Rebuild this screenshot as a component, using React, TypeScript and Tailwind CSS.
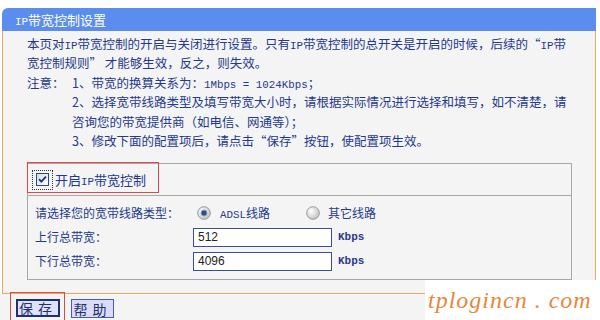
import React from "react";

// half-width text in the old router pages is a small monospace face
const A = ({ children }: { children: React.ReactNode }) => (
  <span className="font-['Liberation_Mono',monospace] text-[10.8px] leading-none">{children}</span>
);

const CheckBox = () => (
  <span className="flex h-[20px] w-[21px] items-center justify-center border border-dotted border-[#333]">
    <svg width="13" height="13" viewBox="0 0 13 13">
      <defs>
        <linearGradient id="cb" x1="0" y1="0" x2="1" y2="1">
          <stop offset="0" stopColor="#dcdcdc" />
          <stop offset="1" stopColor="#ffffff" />
        </linearGradient>
      </defs>
      <rect x="0.5" y="0.5" width="12" height="12" fill="url(#cb)" stroke="#1c5180" />
      <path d="M3 6.2 L5.3 8.6 L10 3.6" fill="none" stroke="#21308a" strokeWidth="1.8" />
    </svg>
  </span>
);

const Radio = ({ checked }: { checked?: boolean }) => (
  <svg width="14" height="14" viewBox="0 0 14 14">
    <defs>
      <radialGradient id={checked ? "rg1" : "rg2"} cx="0.35" cy="0.35" r="0.8">
        <stop offset="0" stopColor="#ffffff" />
        <stop offset="1" stopColor="#b9b9b9" />
      </radialGradient>
    </defs>
    <circle cx="7" cy="7" r="6.3" fill={`url(#${checked ? "rg1" : "rg2"})`} stroke="#9a9a9a" />
    {checked && <circle cx="7" cy="7" r="3" fill="#34507a" stroke="#7d9ccf" strokeWidth="1" />}
  </svg>
);

const Field = ({ value }: { value: string }) => (
  <div className="flex items-center">
    <div className="flex h-[19px] w-[139px] items-center border border-[#3b4c9e] bg-white pl-[4px] font-['Liberation_Sans',sans-serif] text-[12px] text-[#222]">
      {value}
    </div>
    <span className="ml-[6px] font-['Liberation_Mono',monospace] text-[11px] font-bold text-[#2b3a8a]">Kbps</span>
  </div>
);

export default function App() {
  return (
    <div className="relative h-[320px] w-[600px] overflow-hidden bg-white pt-[8px] font-['Noto_Sans_CJK_SC',sans-serif]">
      <div className="ml-[2px] w-[594px]">
        <div className="h-[23px] rounded-tl-[6px] bg-[#5b8def] pl-[13px] text-[13px] leading-[23px] text-white">
          <A>IP</A>带宽控制设置
        </div>
        <div className="h-[263px] border-x border-b border-[#f3a65d] bg-[#f4f4f4] pl-[24px] pt-[3px] text-[#24398d]">
          <div className="whitespace-nowrap text-[12.5px] leading-[19.4px]">
            <p>
              本页对<A>IP</A>带宽控制的开启与关闭进行设置。只有<A>IP</A>带宽控制的总开关是开启的时候，后续的“<A>IP</A>带
            </p>
            <p>宽控制规则” 才能够生效，反之，则失效。</p>
            <div className="flex">
              <span className="w-[45px]">注意：</span>
              <div>
                <p>
                  1、带宽的换算关系为：<A>1Mbps = 1024Kbps</A>；
                </p>
                <p>2、选择宽带线路类型及填写带宽大小时，请根据实际情况进行选择和填写，如不清楚，请</p>
                <p>咨询您的带宽提供商（如电信、网通等）；</p>
                <p>3、修改下面的配置项后，请点击“保存”按钮，使配置项生效。</p>
              </div>
            </div>
          </div>

          <div className="relative mt-[13px] w-[545px] border border-[#a8a8a8]">
            <div className="flex h-[32px] items-center gap-[2px] border-b border-[#a8a8a8] pl-[4px] text-[13px]">
              <CheckBox />
              <span>
                开启<A>IP</A>带宽控制
              </span>
            </div>
            <div className="absolute left-[-1px] top-[-2px] h-[31px] w-[132px] border border-[#e04848]" />
            <div className="pb-[6px] pl-[7px] pt-[5px] text-[12px]">
              <div className="grid h-[24px] grid-cols-[158px_1fr] items-center">
                <span>请选择您的宽带线路类型：</span>
                <div className="flex items-center">
                  <span className="ml-[4px]">
                    <Radio checked />
                  </span>
                  <span className="ml-[9px]">
                    <A>ADSL</A>线路
                  </span>
                  <span className="ml-[36px]">
                    <Radio />
                  </span>
                  <span className="ml-[8px]">其它线路</span>
                </div>
              </div>
              <div className="grid h-[24px] grid-cols-[158px_1fr] items-center">
                <span>上行总带宽：</span>
                <Field value="512" />
              </div>
              <div className="grid h-[24px] grid-cols-[158px_1fr] items-center">
                <span>下行总带宽：</span>
                <Field value="4096" />
              </div>
            </div>
          </div>
        </div>
      </div>

      <div className="relative flex h-[26px] items-start gap-[11px] bg-[#f4f4f4] pl-[16px] pt-[5px]">
        <button className="h-[18px] w-[44px] border-2 border-[#1f2f70] bg-[#dfe3f6] text-[14px] leading-[14px] tracking-[5px] text-[#1f2f70]">
          保存
        </button>
        <button className="h-[19px] w-[43px] border border-[#4b5cb0] bg-[#dadcf7] text-[14px] leading-[16px] tracking-[5px] text-[#1f2f70]">
          帮助
        </button>
        <div className="absolute left-[10px] top-[-2px] h-[32px] w-[55px] border border-[#e04848]" />
      </div>

      <div className="absolute bottom-0 right-0 flex h-[40px] w-[175px] items-center bg-white pl-[3px]">
        <span className="whitespace-nowrap font-['Liberation_Serif',serif] text-[24px] italic tracking-[1px] text-[#e8873c]">
          tplogincn . com
        </span>
      </div>
    </div>
  );
}
